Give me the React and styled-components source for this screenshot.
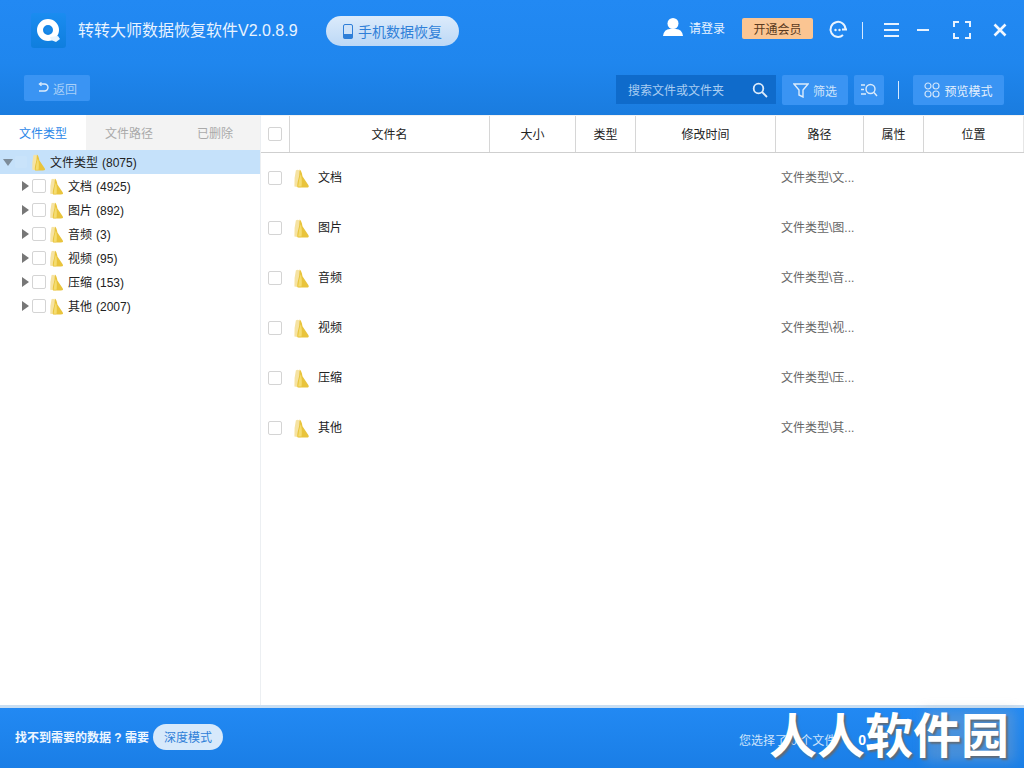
import React from "react";
import styled, { createGlobalStyle } from "styled-components";

const Global = createGlobalStyle`
  html, body { margin: 0; padding: 0; }
  body { font-family: "Liberation Sans", "Noto Sans CJK SC", sans-serif; background: #fff; }
  * { box-sizing: border-box; }
`;

const Page = styled.div`
  width: 1024px; height: 768px; display: flex; flex-direction: column; position: relative; overflow: hidden; background: #fff;
`;
const Header = styled.header`
  height: 115px; flex: none; background: linear-gradient(180deg, #2289f3 0%, #1f86ee 55%, #1a7cdf 100%);
  display: flex; flex-direction: column; color: #fff;
`;
const TitleBar = styled.div`
  height: 75px; flex: none; display: flex; align-items: flex-start; padding: 13px 14px 0 31px;
`;
const Logo = styled.div`
  width: 35px; height: 35px; background: linear-gradient(180deg,#1a8cf0,#0f7ede); border-radius: 3px;
  display: flex; align-items: center; justify-content: center; flex: none;
`;
const AppTitle = styled.div`
  margin-left: 12px; margin-top: 8px; font-size: 16px; line-height: 20px; color: #e8f3ff; white-space: nowrap; width: 218px; flex: none;
`;
const PhoneBtn = styled.div`
  margin-left: 30px; margin-top: 3px; width: 133px; height: 30px; border-radius: 15px;
  background: linear-gradient(180deg,#dcebfb,#bcd8f6); color: #2f7fd8; font-size: 14px;
  display: flex; align-items: center; justify-content: center; gap: 5px;
`;
const Spacer = styled.div` flex: 1; `;
const Login = styled.div`
  display: flex; align-items: center; gap: 5px; font-size: 12px; color: #e8f3ff; margin-top: 1px; height: 26px;
`;
const Vip = styled.div`
  margin-left: 17px; margin-top: 5px; width: 71px; height: 21px; border-radius: 2px; background: #fbc592;
  color: #5a3a20; font-size: 12px; display: flex; align-items: center; justify-content: center;
`;
const WinIcon = styled.div`
  margin-left: ${p => p.$ml}px; margin-top: 6px; width: ${p => p.$w || 20}px; height: 22px; display: flex; align-items: center; justify-content: center;
`;
const Sep = styled.div`
  width: 1px; height: ${p => p.$h}px; background: #d6e9ff; margin-left: ${p => p.$ml}px; margin-top: ${p => p.$mt || 0}px; flex: none;
`;
const ToolBar = styled.div`
  height: 30px; display: flex; align-items: flex-start; padding: 0 20px 0 24px;
`;
const ToolBtn = styled.div`
  height: ${p => p.$h || 26}px; width: ${p => p.$w}px; margin-left: ${p => p.$ml || 0}px; background: #3a94f3; border-radius: 2px;
  display: flex; align-items: center; justify-content: center; gap: 4px; font-size: 12px; color: ${p => p.$c || "#cfe4fb"}; flex: none;
`;
const Search = styled.div`
  width: 160px; height: 29px; background: #0f6bcb; display: flex; align-items: center; justify-content: space-between;
  padding: 0 8px 0 12px; font-size: 12px; color: #a9cdf2; flex: none;
`;
const Main = styled.main`
  flex: 1; display: flex; min-height: 0;
`;
const Side = styled.aside`
  width: 261px; flex: none; border-right: 1px solid #eceff2; display: flex; flex-direction: column;
`;
const Tabs = styled.div`
  height: 35px; display: flex; flex: none;
`;
const Tab = styled.div`
  width: ${p => p.$w}px; padding-right: ${p => p.$pr || 0}px; display: flex; align-items: center; justify-content: center; font-size: 12px;
  background: ${p => p.$on ? "#fff" : "#f3f3f3"}; color: ${p => p.$on ? "#2b87e8" : "#aaa"};
`;
const Row = styled.div`
  height: 24px; display: flex; align-items: center; font-size: 12px; color: #222; white-space: pre;
  padding-left: ${p => p.$root ? 3 : 22}px; background: ${p => p.$root ? "#c5e1fa" : "transparent"};
`;
const Arrow = styled.span`
  width: 0; height: 0; flex: none;
  ${p => p.$down
    ? "border-left: 5px solid transparent; border-right: 5px solid transparent; border-top: 7px solid #7d8c99; margin-right: 1px;"
    : "border-top: 5px solid transparent; border-bottom: 5px solid transparent; border-left: 7px solid #777; margin-right: 3px;"}
`;
const Check = styled.span`
  width: 14px; height: 14px; border: 1px solid ${p => p.$faint ? "#c5e1fa" : "#d4d4d4"}; border-radius: 2px; background: ${p => p.$faint ? "#c9e3fa" : "#fff"}; flex: none; display: block;
`;
const TreeFolder = styled.span`
  margin-left: 3px; display: flex; flex: none;
`;
const Label = styled.span`
  margin-left: 3px; margin-bottom: 2px;
`;
const Count = styled.span`
  margin-left: 4px;
`;
const Table = styled.section`
  flex: 1; display: flex; flex-direction: column; min-width: 0;
`;
const THead = styled.div`
  height: 38px; flex: none; display: flex; border-bottom: 1px solid #cfcfcf; border-top: 1px solid #f2f2f2;
`;
const Th = styled.div`
  width: ${p => p.$w}px; flex: none; border-right: 1px solid #d6d6d6; display: flex; align-items: center; justify-content: center;
  font-size: 12px; color: #222; padding-bottom: 2px;
  &:last-child { flex: 1; border-right: 1px solid #e6e6e6; }
`;
const HeadCheck = styled.span`
  margin-right: 1px; margin-top: 1px; display: flex;
`;
const TRow = styled.div`
  height: 50px; display: flex; align-items: center; font-size: 12px; color: #333;
`;
const CheckCell = styled.div`
  width: 28px; flex: none; display: flex; justify-content: center;
`;
const NameCell = styled.div`
  width: 492px; flex: none; display: flex; align-items: center; gap: 7px; padding-left: 4px; color: #222;
`;
const CellText = styled.span`
  margin-bottom: 3px;
`;
const PathCell = styled.div`
  color: #666; white-space: nowrap; margin-bottom: 3px;
`;
const Footer = styled.footer`
  height: 63px; flex: none; border-top: 3px solid #c9def2; background: linear-gradient(180deg,#2289f3,#1a7ee6);
  display: flex; align-items: center; padding: 0 0 0 15px; color: #fff; position: relative;
`;
const FootText = styled.div`
  font-size: 12px; font-weight: 700; color: #eef6ff; white-space: nowrap; margin-top: -3px;
`;
const DeepBtn = styled.div`
  margin-left: 4px; margin-top: -3px; width: 70px; height: 26px; border-radius: 13px; background: #d7e9fb; color: #2f80d8; font-size: 12px;
  display: flex; align-items: center; justify-content: center;
`;
const Selected = styled.div`
  position: absolute; left: 739px; top: 23px; font-size: 12px; color: #cfe4fb; white-space: nowrap;
  b { color: #fff; font-size: 14px; margin-left: 22px; }
`;
const Watermark = styled.div`
  position: absolute; left: 769px; top: 703px; font-size: 48px; line-height: 58px; font-weight: 700; color: #fff; white-space: nowrap;
  font-family: "Noto Sans CJK SC", sans-serif;
  text-shadow: 2px 2px 2px #5f6b78;
`;
const Fade = styled.div`
  position: absolute; left: 925px; top: 710px; width: 90px; height: 52px; background: rgba(150,170,190,.35); filter: blur(6px);
`;

const Folder = ({ w = 18, h = 21 }) => (
  <svg width={w} height={h} viewBox="0 0 19 21">
    <path d="M3 2 Q1 10 1.5 19 L8 20 L8 3 Q5 0 3 2Z" fill="#f6e3a2" />
    <path d="M7 1 Q9 2 10 8 L16 17 Q18 20 14 20 L5 20 Q4 19 5 14 Q7 8 7 1Z" fill="#e9c43c" />
    <path d="M8 6 Q10 10 9 19 L5.5 19 Q6 12 8 6Z" fill="#f4dc70" />
  </svg>
);

const tree = [["文档", "4925"], ["图片", "892"], ["音频", "3"], ["视频", "95"], ["压缩", "153"], ["其他", "2007"]];
const rows = [["文档", "文"], ["图片", "图"], ["音频", "音"], ["视频", "视"], ["压缩", "压"], ["其他", "其"]];
const cols = [["文件名", 200], ["大小", 86], ["类型", 60], ["修改时间", 140], ["路径", 88], ["属性", 60], ["位置", 100]];

export default function App() {
  return (
    <Page>
      <Global />
      <Header>
        <TitleBar>
          <Logo>
            <svg width="26" height="26" viewBox="0 0 26 26">
              <circle cx="12" cy="12" r="8" fill="none" stroke="#fff" strokeWidth="6" />
              <circle cx="12" cy="12" r="3" fill="#1b8ae8" />
              <path d="M14 19 L22 18 L24 21 L20 24 L15 22Z" fill="#e8f5ff" />
            </svg>
          </Logo>
          <AppTitle>转转大师数据恢复软件V2.0.8.9</AppTitle>
          <PhoneBtn>
            <svg width="10" height="15" viewBox="0 0 10 15">
              <rect x="0.5" y="0.5" width="9" height="14" rx="1.5" fill="#cfe2f8" stroke="#2f7fd8" />
              <rect x="0.5" y="10" width="9" height="4.5" fill="#2f7fd8" />
            </svg>
            手机数据恢复
          </PhoneBtn>
          <Spacer />
          <Login>
            <svg width="22" height="20" viewBox="0 0 22 20">
              <circle cx="11" cy="6.5" r="5.5" fill="#fff" />
              <path d="M1 19 Q2 12 8 12 L14 12 Q20 12 21 19Z" fill="#fff" />
            </svg>
            请登录
          </Login>
          <Vip>开通会员</Vip>
          <WinIcon $ml={14} $w={22}>
            <svg width="20" height="20" viewBox="0 0 20 20" fill="none" stroke="#e8f3ff" strokeWidth="2">
              <path d="M15 15 A7.5 7.5 0 1 1 17.5 9" />
              <path d="M14 9.5 L19 9.5" />
              <circle cx="7.5" cy="10" r="1.2" fill="#e8f3ff" stroke="none" />
              <circle cx="11.5" cy="10" r="1.2" fill="#e8f3ff" stroke="none" />
            </svg>
          </WinIcon>
          <Sep $h={17} $ml={13} $mt={9} />
          <WinIcon $ml={18} $w={20}>
            <svg width="18" height="16" viewBox="0 0 18 16" stroke="#e8f3ff" strokeWidth="2">
              <path d="M2 2H17M2 8H17M2 14H17" />
            </svg>
          </WinIcon>
          <WinIcon $ml={12} $w={20}>
            <svg width="14" height="4" viewBox="0 0 14 4" stroke="#e8f3ff" strokeWidth="2"><path d="M1 2H13" /></svg>
          </WinIcon>
          <WinIcon $ml={19} $w={20}>
            <svg width="18" height="18" viewBox="0 0 18 18" fill="none" stroke="#e8f3ff" strokeWidth="2">
              <path d="M1 6V1H6M12 1H17V6M17 12V17H12M6 17H1V12" />
            </svg>
          </WinIcon>
          <WinIcon $ml={18} $w={20}>
            <svg width="14" height="14" viewBox="0 0 14 14" stroke="#f2f8ff" strokeWidth="2.6"><path d="M1.5 1.5L12.5 12.5M12.5 1.5L1.5 12.5" /></svg>
          </WinIcon>
        </TitleBar>
        <ToolBar>
          <ToolBtn $w={66} $c="#a9d0f8">
            <svg width="12" height="12" viewBox="0 0 12 12" fill="none" stroke="#dcebfb" strokeWidth="1.4">
              <path d="M3 2H7.5A3.2 3.2 0 0 1 7.5 9H2" /><path d="M4.5 0.5L2.5 2L4.5 3.8" />
            </svg>
            返回
          </ToolBtn>
          <Spacer />
          <Search>
            搜索文件或文件夹
            <svg width="16" height="16" viewBox="0 0 16 16" fill="none" stroke="#dcebfb" strokeWidth="1.8">
              <circle cx="6.5" cy="6.5" r="4.8" /><path d="M10 10L15 15" />
            </svg>
          </Search>
          <ToolBtn $w={66} $h={30} $ml={6}>
            <svg width="16" height="15" viewBox="0 0 16 15" fill="none" stroke="#dcebfb" strokeWidth="1.4">
              <path d="M1 1H15L10 7V14L6 12V7Z" />
            </svg>
            筛选
          </ToolBtn>
          <ToolBtn $w={30} $h={30} $ml={6}>
            <svg width="18" height="14" viewBox="0 0 18 14" fill="none" stroke="#dcebfb" strokeWidth="1.4">
              <circle cx="10.5" cy="6" r="4.5" /><path d="M14 9.5L17 13M1 2H5M1 6.5H4M1 11H6" />
            </svg>
          </ToolBtn>
          <Sep $h={18} $ml={14} $mt={6} />
          <ToolBtn $w={91} $h={30} $ml={14} $c="#e4f0fd">
            <svg width="16" height="16" viewBox="0 0 16 16" fill="none" stroke="#cfe4fb" strokeWidth="1.2">
              <circle cx="4" cy="4" r="3" /><circle cx="12" cy="4" r="3" /><circle cx="4" cy="12" r="3" /><circle cx="12" cy="12" r="3" />
            </svg>
            预览模式
          </ToolBtn>
        </ToolBar>
      </Header>
      <Main>
        <Side>
          <Tabs>
            <Tab $w={86} $on>文件类型</Tab>
            <Tab $w={86}>文件路径</Tab>
            <Tab $w={88} $pr={2}>已删除</Tab>
          </Tabs>
          <Row $root>
            <Arrow $down />
            <Check $faint />
            <TreeFolder><Folder w={16} h={19} /></TreeFolder>
            <Label>文件类型<Count>(8075)</Count></Label>
          </Row>
          {tree.map(([n, c]) => (
            <Row key={n}>
              <Arrow />
              <Check />
              <TreeFolder><Folder w={16} h={19} /></TreeFolder>
              <Label>{n}<Count>({c})</Count></Label>
            </Row>
          ))}
        </Side>
        <Table>
          <THead>
            <Th $w={29}><HeadCheck><Check /></HeadCheck></Th>
            {cols.map(([n, w]) => <Th key={n} $w={w}>{n}</Th>)}
          </THead>
          {rows.map(([n, s]) => (
            <TRow key={n}>
              <CheckCell><Check /></CheckCell>
              <NameCell><Folder /><CellText>{n}</CellText></NameCell>
              <PathCell>文件类型\{s}...</PathCell>
            </TRow>
          ))}
        </Table>
      </Main>
      <Footer>
        <FootText>找不到需要的数据 ? 需要</FootText>
        <DeepBtn>深度模式</DeepBtn>
        <Selected>您选择了 0 个文件<b>0</b></Selected>
      </Footer>
      <Fade />
      <Watermark>人人软件园</Watermark>
    </Page>
  );
}
